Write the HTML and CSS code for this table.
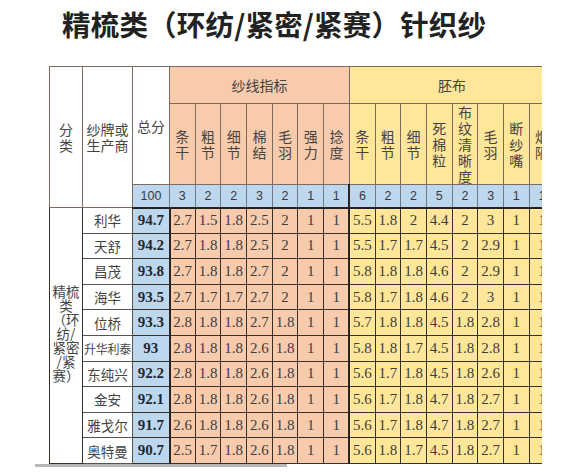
FILE: index.html
```html
<!DOCTYPE html>
<html lang="zh">
<head>
<meta charset="utf-8">
<link rel="stylesheet" href="styles.css">
</head>
<body>
<h1 class="title">精梳类（环纺/紧密/紧赛）针织纱</h1>
<div class="sheet">
<table class="grid">
<colgroup><col class="c-cat"><col class="c-brand"><col class="c-total"><col span="15" class="c-n"></colgroup>
<thead>
<tr class="r1">
<th rowspan="3" class="hw cat-h">分<br>类</th>
<th rowspan="3" class="hw">纱牌或<br>生产商</th>
<th rowspan="2" class="hw">总分</th>
<th colspan="7" class="yarn grp">纱线指标</th>
<th colspan="8" class="fab grp">胚布</th>
</tr>
<tr class="r2">
<th class="yarn sub">条干</th><th class="yarn sub">粗节</th><th class="yarn sub">细节</th><th class="yarn sub">棉结</th><th class="yarn sub">毛羽</th><th class="yarn sub">强力</th><th class="yarn sub">捻度</th>
<th class="fab sub fab-first">条干</th><th class="fab sub">粗节</th><th class="fab sub">细节</th><th class="fab sub">死棉粒</th><th class="fab sub">布纹清晰度</th><th class="fab sub">毛羽</th><th class="fab sub">断纱嘴</th><th class="fab sub">烟隔</th>
</tr>
<tr class="r3">
<td class="score">100</td>
<td class="score">3</td><td class="score">2</td><td class="score">2</td><td class="score">3</td><td class="score">2</td><td class="score">1</td><td class="score">1</td>
<td class="score fab-first">6</td><td class="score">2</td><td class="score">2</td><td class="score">5</td><td class="score">2</td><td class="score">3</td><td class="score">1</td><td class="score">1</td>
</tr>
</thead>
<tbody>
<tr>
<td rowspan="10" class="cat"><span class="cat-text">精梳<br>类<br>（环<br>纺/<br>紧密<br>/紧<br>赛）</span></td>
<td class="brand">利华</td><td class="tot">94.7</td>
<td class="y">2.7</td><td class="y">1.5</td><td class="y">1.8</td><td class="y">2.5</td><td class="y">2</td><td class="y">1</td><td class="y">1</td>
<td class="f fab-first">5.5</td><td class="f">1.8</td><td class="f">2</td><td class="f">4.4</td><td class="f">2</td><td class="f">3</td><td class="f">1</td><td class="f">1</td>
</tr>
<tr>
<td class="brand">天舒</td><td class="tot">94.2</td>
<td class="y">2.7</td><td class="y">1.8</td><td class="y">1.8</td><td class="y">2.5</td><td class="y">2</td><td class="y">1</td><td class="y">1</td>
<td class="f fab-first">5.5</td><td class="f">1.7</td><td class="f">1.7</td><td class="f">4.5</td><td class="f">2</td><td class="f">2.9</td><td class="f">1</td><td class="f">1</td>
</tr>
<tr class="glow">
<td class="brand">昌茂</td><td class="tot">93.8</td>
<td class="y">2.7</td><td class="y">1.8</td><td class="y">1.8</td><td class="y">2.7</td><td class="y">2</td><td class="y">1</td><td class="y">1</td>
<td class="f fab-first">5.8</td><td class="f">1.8</td><td class="f">1.8</td><td class="f">4.6</td><td class="f">2</td><td class="f">2.9</td><td class="f">1</td><td class="f">1</td>
</tr>
<tr class="glow">
<td class="brand">海华</td><td class="tot">93.5</td>
<td class="y">2.7</td><td class="y">1.7</td><td class="y">1.7</td><td class="y">2.7</td><td class="y">2</td><td class="y">1</td><td class="y">1</td>
<td class="f fab-first">5.8</td><td class="f">1.7</td><td class="f">1.8</td><td class="f">4.6</td><td class="f">2</td><td class="f">3</td><td class="f">1</td><td class="f">1</td>
</tr>
<tr>
<td class="brand">位桥</td><td class="tot">93.3</td>
<td class="y">2.8</td><td class="y">1.8</td><td class="y">1.8</td><td class="y">2.7</td><td class="y">1.8</td><td class="y">1</td><td class="y">1</td>
<td class="f fab-first">5.7</td><td class="f">1.8</td><td class="f">1.8</td><td class="f">4.5</td><td class="f">1.8</td><td class="f">2.8</td><td class="f">1</td><td class="f">1</td>
</tr>
<tr>
<td class="brand brand-long">升华利泰</td><td class="tot">93</td>
<td class="y">2.8</td><td class="y">1.8</td><td class="y">1.8</td><td class="y">2.6</td><td class="y">1.8</td><td class="y">1</td><td class="y">1</td>
<td class="f fab-first">5.8</td><td class="f">1.8</td><td class="f">1.7</td><td class="f">4.5</td><td class="f">1.8</td><td class="f">2.8</td><td class="f">1</td><td class="f">1</td>
</tr>
<tr class="glow">
<td class="brand">东纯兴</td><td class="tot">92.2</td>
<td class="y">2.8</td><td class="y">1.8</td><td class="y">1.8</td><td class="y">2.6</td><td class="y">1.8</td><td class="y">1</td><td class="y">1</td>
<td class="f fab-first">5.6</td><td class="f">1.7</td><td class="f">1.8</td><td class="f">4.5</td><td class="f">1.8</td><td class="f">2.6</td><td class="f">1</td><td class="f">1</td>
</tr>
<tr class="glow">
<td class="brand">金安</td><td class="tot">92.1</td>
<td class="y">2.8</td><td class="y">1.8</td><td class="y">1.8</td><td class="y">2.6</td><td class="y">1.8</td><td class="y">1</td><td class="y">1</td>
<td class="f fab-first">5.6</td><td class="f">1.7</td><td class="f">1.8</td><td class="f">4.7</td><td class="f">1.8</td><td class="f">2.7</td><td class="f">1</td><td class="f">1</td>
</tr>
<tr>
<td class="brand">雅戈尔</td><td class="tot">91.7</td>
<td class="y">2.6</td><td class="y">1.8</td><td class="y">1.8</td><td class="y">2.6</td><td class="y">1.8</td><td class="y">1</td><td class="y">1</td>
<td class="f fab-first">5.6</td><td class="f">1.7</td><td class="f">1.8</td><td class="f">4.7</td><td class="f">1.8</td><td class="f">2.7</td><td class="f">1</td><td class="f">1</td>
</tr>
<tr>
<td class="brand">奥特曼</td><td class="tot">90.7</td>
<td class="y">2.5</td><td class="y">1.7</td><td class="y">1.8</td><td class="y">2.6</td><td class="y">1.8</td><td class="y">1</td><td class="y">1</td>
<td class="f fab-first">5.6</td><td class="f">1.8</td><td class="f">1.7</td><td class="f">4.5</td><td class="f">1.8</td><td class="f">2.7</td><td class="f">1</td><td class="f">1</td>
</tr>
</tbody>
</table>
</div>
<div class="shade"></div>
</body>
</html>
```
FILE: styles.css
```css
html, body {
  margin: 0;
  padding: 0;
  background: #ffffff;
}
body {
  width: 576px;
  font-family: "Noto Sans CJK SC", "Noto Sans", sans-serif;
  color: #3a3a3a;
}
.title {
  margin: 0 0 18px 0;
  padding-left: 62px;
  height: 48px;
  line-height: 48px;
  font-size: 28.5px;
  font-weight: 700;
  color: #222222;
  letter-spacing: 0.2px;
  white-space: nowrap;
}
.sheet {
  margin-left: 49px;
  width: 493px;
  overflow: hidden;
}
.grid {
  border-collapse: collapse;
  table-layout: fixed;
  width: 505.6px;
}
.c-cat { width: 33px; }
.c-brand { width: 50px; }
.c-total { width: 37px; }
.c-n { width: 25.7px; }
.grid th, .grid td {
  padding: 0;
  text-align: center;
  vertical-align: middle;
  overflow: hidden;
  white-space: normal;
}
.grid th {
  font-weight: 400;
  font-size: 14px;
  line-height: 16px;
  color: #444444;
  border: 1px solid #7a6a60;
}
.r1 { height: 37px; }
.r2 { height: 79px; }
.r3 { height: 23px; }
.hw {
  background: #ffffff;
  border-color: #555555;
}
.yarn { background: #f8cbad; }
.fab { background: #ffe699; }
.grp {
  font-size: 13px;
  line-height: 16px;
}
.sub {
  font-size: 14px;
  line-height: 15.5px;
  word-break: break-all;
}
.score {
  background: #bdd7ee;
  font-family: "Liberation Sans", Arial, sans-serif;
  font-size: 12.5px;
  color: #3a3a3a;
  border: 1px solid #6f7b88;
  border-bottom: 2px solid #222222;
}
.grid tbody tr { height: 25.6px; }
.grid tbody td {
  border: 1px solid #3a302a;
  font-family: "Liberation Serif", serif;
  font-size: 15px;
  color: #3d3d3d;
}
.grid tbody td.cat {
  font-family: "Noto Sans CJK SC", sans-serif;
  font-size: 13.5px;
  line-height: 14px;
  color: #444444;
  text-align: center;
  background: #ffffff;
}
.cat-text {
  display: inline-block;
  line-height: 14px;
  padding-bottom: 4px;
}
.grid tbody td.brand {
  font-family: "Noto Sans CJK SC", sans-serif;
  font-size: 13.5px;
  color: #444444;
  background: #ffffff;
  border-color: #555555;
  white-space: nowrap;
}
.grid tbody td.brand-long {
  font-size: 12px;
  letter-spacing: -0.2px;
}
.grid tbody td.tot {
  background: #bdd7ee;
  font-weight: 700;
  color: #1f2733;
  border-right: 2px solid #2a2520;
}
.grid tbody td.y { background: #f8cbad; }
.grid tbody td.f { background: #ffe699; }
.grid td.fab-first { border-left: 2px solid #2a2520; }
.grid th.fab-first { border-left: 1px solid #9a8a70; }
.glow td.y {
  background: radial-gradient(ellipse at center, #fff6ef 0%, #fbdcc6 45%, #f8cbad 80%);
}
.glow td.f {
  background: radial-gradient(ellipse at center, #fff9e6 0%, #ffedb6 45%, #ffe699 80%);
}
.shade {
  margin-left: 35px;
  width: 252px;
  height: 3px;
  background: #b9b9b9;
}
```
